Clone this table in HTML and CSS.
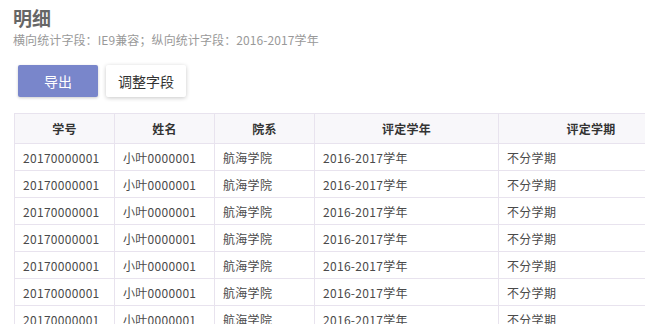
FILE: index.html
```html
<!DOCTYPE html>
<html lang="zh-CN">
<head>
<meta charset="utf-8">
<title>明细</title>
<link rel="stylesheet" href="styles.css">
</head>
<body>
<div class="page">
  <div class="head">
    <h1 class="title">明细</h1>
    <p class="subtitle">横向统计字段：IE9兼容；纵向统计字段：2016-2017学年</p>
  </div>
  <div class="actions">
    <button class="btn btn-primary">导出</button>
    <button class="btn btn-default">调整字段</button>
  </div>
  <div class="table-wrap">
    <table class="grid">
      <colgroup>
        <col class="c-num"><col class="c-name"><col class="c-dept"><col class="c-year"><col class="c-term">
      </colgroup>
      <thead>
        <tr><th>学号</th><th>姓名</th><th>院系</th><th>评定学年</th><th>评定学期</th></tr>
      </thead>
      <tbody>
        <tr><td>20170000001</td><td>小叶0000001</td><td>航海学院</td><td>2016-2017学年</td><td>不分学期</td></tr>
        <tr><td>20170000001</td><td>小叶0000001</td><td>航海学院</td><td>2016-2017学年</td><td>不分学期</td></tr>
        <tr><td>20170000001</td><td>小叶0000001</td><td>航海学院</td><td>2016-2017学年</td><td>不分学期</td></tr>
        <tr><td>20170000001</td><td>小叶0000001</td><td>航海学院</td><td>2016-2017学年</td><td>不分学期</td></tr>
        <tr><td>20170000001</td><td>小叶0000001</td><td>航海学院</td><td>2016-2017学年</td><td>不分学期</td></tr>
        <tr><td>20170000001</td><td>小叶0000001</td><td>航海学院</td><td>2016-2017学年</td><td>不分学期</td></tr>
        <tr><td>20170000001</td><td>小叶0000001</td><td>航海学院</td><td>2016-2017学年</td><td>不分学期</td></tr>
      </tbody>
    </table>
  </div>
</div>
</body>
</html>
```
FILE: styles.css
```css
html, body {
  margin: 0;
  padding: 0;
  background: #fff;
  overflow: hidden;
}
body {
  font-family: "Noto Sans CJK SC", "Noto Sans", sans-serif;
  color: #333;
}
.page {
  padding: 4px 0 0 14px;
}
.title {
  margin: 0 0 0 -1px;
  font-size: 19px;
  line-height: 28px;
  font-weight: 700;
  color: #666;
}
.subtitle {
  margin: 0 0 0 -1px;
  font-size: 12px;
  line-height: 16px;
  color: #999;
  letter-spacing: 0.1px;
}
.actions {
  display: flex;
  gap: 8px;
  margin-top: 17px;
  padding-left: 4px;
}
.btn {
  width: 80px;
  height: 32px;
  border: none;
  border-radius: 2px;
  font-family: inherit;
  font-size: 14px;
  padding: 0;
  cursor: pointer;
}
.btn-primary {
  background: #7986cb;
  color: #fff;
  box-shadow: 0 1px 3px rgba(0,0,0,0.2);
}
.btn-default {
  background: #fff;
  color: #333;
  box-shadow: 0 1px 4px rgba(0,0,0,0.22);
}
.table-wrap {
  margin-top: 16px;
  width: 700px;
}
.grid {
  border-collapse: collapse;
  table-layout: fixed;
  width: 669px;
  font-size: 12px;
  letter-spacing: 0.3px;
}
.c-num, .c-name, .c-dept { width: 100px; }
.c-year { width: 184px; }
.c-term { width: 185px; }
.grid th, .grid td {
  border: 1px solid #e8e3ee;
  padding: 0 8px;
  white-space: nowrap;
  overflow: hidden;
}
.grid th {
  height: 29px;
  background: #f8f7fa;
  font-weight: 700;
  color: #333;
  text-align: center;
}
.grid td {
  height: 26px;
  color: #4a4a4a;
  text-align: left;
}
```
